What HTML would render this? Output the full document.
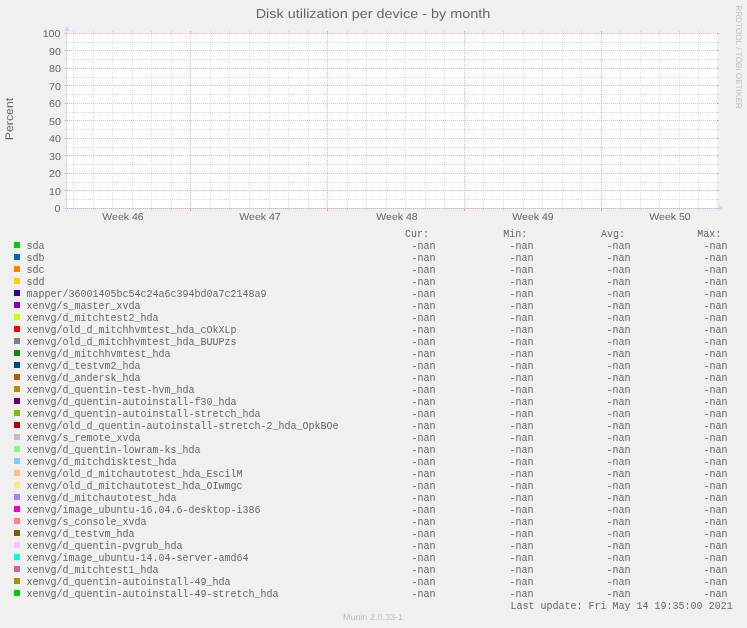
<!DOCTYPE html>
<html><head><meta charset="utf-8"><style>
html,body{margin:0;padding:0;}
body{width:747px;height:628px;background:#F0F0F0;position:relative;overflow:hidden;}
.m{position:absolute;font-family:"Liberation Mono",monospace;font-size:10px;line-height:0;color:#666666;white-space:pre;}
.s{text-rendering:geometricPrecision;position:absolute;font-family:"Liberation Sans",sans-serif;line-height:0;color:#666666;white-space:pre;}
.wm{color:#BEBEBE;}
</style></head><body>
<svg width="747" height="628" viewBox="0 0 747 628" style="position:absolute;left:0;top:0" shape-rendering="crispEdges"><rect x="67" y="33" width="650" height="175" fill="#FFFFFF"/><rect x="66" y="29" width="1" height="183" fill="#D8DBF6"/><rect x="63" y="208" width="659" height="1" fill="#D8DBF6"/><rect x="65" y="42" width="1" height="1" fill="#B5B5B5" fill-opacity="0.52"/><rect x="717" y="42" width="2" height="1" fill="#B5B5B5" fill-opacity="0.52"/><path d="M66 42.5H717" stroke="#B5B5B5" stroke-opacity="0.52" stroke-dasharray="1 1"/><rect x="65" y="59" width="1" height="1" fill="#B5B5B5" fill-opacity="0.52"/><rect x="717" y="59" width="2" height="1" fill="#B5B5B5" fill-opacity="0.52"/><path d="M66 59.5H717" stroke="#B5B5B5" stroke-opacity="0.52" stroke-dasharray="1 1"/><rect x="65" y="77" width="1" height="1" fill="#B5B5B5" fill-opacity="0.52"/><rect x="717" y="77" width="2" height="1" fill="#B5B5B5" fill-opacity="0.52"/><path d="M66 77.5H717" stroke="#B5B5B5" stroke-opacity="0.52" stroke-dasharray="1 1"/><rect x="65" y="94" width="1" height="1" fill="#B5B5B5" fill-opacity="0.52"/><rect x="717" y="94" width="2" height="1" fill="#B5B5B5" fill-opacity="0.52"/><path d="M66 94.5H717" stroke="#B5B5B5" stroke-opacity="0.52" stroke-dasharray="1 1"/><rect x="65" y="112" width="1" height="1" fill="#B5B5B5" fill-opacity="0.52"/><rect x="717" y="112" width="2" height="1" fill="#B5B5B5" fill-opacity="0.52"/><path d="M66 112.5H717" stroke="#B5B5B5" stroke-opacity="0.52" stroke-dasharray="1 1"/><rect x="65" y="129" width="1" height="1" fill="#B5B5B5" fill-opacity="0.52"/><rect x="717" y="129" width="2" height="1" fill="#B5B5B5" fill-opacity="0.52"/><path d="M66 129.5H717" stroke="#B5B5B5" stroke-opacity="0.52" stroke-dasharray="1 1"/><rect x="65" y="147" width="1" height="1" fill="#B5B5B5" fill-opacity="0.52"/><rect x="717" y="147" width="2" height="1" fill="#B5B5B5" fill-opacity="0.52"/><path d="M66 147.5H717" stroke="#B5B5B5" stroke-opacity="0.52" stroke-dasharray="1 1"/><rect x="65" y="164" width="1" height="1" fill="#B5B5B5" fill-opacity="0.52"/><rect x="717" y="164" width="2" height="1" fill="#B5B5B5" fill-opacity="0.52"/><path d="M66 164.5H717" stroke="#B5B5B5" stroke-opacity="0.52" stroke-dasharray="1 1"/><rect x="65" y="182" width="1" height="1" fill="#B5B5B5" fill-opacity="0.52"/><rect x="717" y="182" width="2" height="1" fill="#B5B5B5" fill-opacity="0.52"/><path d="M66 182.5H717" stroke="#B5B5B5" stroke-opacity="0.52" stroke-dasharray="1 1"/><rect x="65" y="199" width="1" height="1" fill="#B5B5B5" fill-opacity="0.52"/><rect x="717" y="199" width="2" height="1" fill="#B5B5B5" fill-opacity="0.52"/><path d="M66 199.5H717" stroke="#B5B5B5" stroke-opacity="0.52" stroke-dasharray="1 1"/><rect x="65" y="33" width="1" height="1" fill="#DE4F4F" fill-opacity="0.44"/><rect x="717" y="33" width="2" height="1" fill="#DE4F4F" fill-opacity="0.44"/><path d="M65 33.5H718" stroke="#DE4F4F" stroke-opacity="0.44" stroke-dasharray="1 1"/><rect x="65" y="50" width="1" height="1" fill="#DE4F4F" fill-opacity="0.44"/><rect x="717" y="50" width="2" height="1" fill="#DE4F4F" fill-opacity="0.44"/><path d="M65 50.5H718" stroke="#DE4F4F" stroke-opacity="0.44" stroke-dasharray="1 1"/><rect x="65" y="68" width="1" height="1" fill="#DE4F4F" fill-opacity="0.44"/><rect x="717" y="68" width="2" height="1" fill="#DE4F4F" fill-opacity="0.44"/><path d="M65 68.5H718" stroke="#DE4F4F" stroke-opacity="0.44" stroke-dasharray="1 1"/><rect x="65" y="85" width="1" height="1" fill="#DE4F4F" fill-opacity="0.44"/><rect x="717" y="85" width="2" height="1" fill="#DE4F4F" fill-opacity="0.44"/><path d="M65 85.5H718" stroke="#DE4F4F" stroke-opacity="0.44" stroke-dasharray="1 1"/><rect x="65" y="103" width="1" height="1" fill="#DE4F4F" fill-opacity="0.44"/><rect x="717" y="103" width="2" height="1" fill="#DE4F4F" fill-opacity="0.44"/><path d="M65 103.5H718" stroke="#DE4F4F" stroke-opacity="0.44" stroke-dasharray="1 1"/><rect x="65" y="120" width="1" height="1" fill="#DE4F4F" fill-opacity="0.44"/><rect x="717" y="120" width="2" height="1" fill="#DE4F4F" fill-opacity="0.44"/><path d="M65 120.5H718" stroke="#DE4F4F" stroke-opacity="0.44" stroke-dasharray="1 1"/><rect x="65" y="138" width="1" height="1" fill="#DE4F4F" fill-opacity="0.44"/><rect x="717" y="138" width="2" height="1" fill="#DE4F4F" fill-opacity="0.44"/><path d="M65 138.5H718" stroke="#DE4F4F" stroke-opacity="0.44" stroke-dasharray="1 1"/><rect x="65" y="155" width="1" height="1" fill="#DE4F4F" fill-opacity="0.44"/><rect x="717" y="155" width="2" height="1" fill="#DE4F4F" fill-opacity="0.44"/><path d="M65 155.5H718" stroke="#DE4F4F" stroke-opacity="0.44" stroke-dasharray="1 1"/><rect x="65" y="173" width="1" height="1" fill="#DE4F4F" fill-opacity="0.44"/><rect x="717" y="173" width="2" height="1" fill="#DE4F4F" fill-opacity="0.44"/><path d="M65 173.5H718" stroke="#DE4F4F" stroke-opacity="0.44" stroke-dasharray="1 1"/><rect x="65" y="190" width="1" height="1" fill="#DE4F4F" fill-opacity="0.44"/><rect x="717" y="190" width="2" height="1" fill="#DE4F4F" fill-opacity="0.44"/><path d="M65 190.5H718" stroke="#DE4F4F" stroke-opacity="0.44" stroke-dasharray="1 1"/><rect x="73" y="31" width="1" height="1" fill="#B5B5B5" fill-opacity="0.46"/><rect x="73" y="209" width="1" height="1" fill="#B5B5B5" fill-opacity="0.46"/><path d="M73.5 32V207" stroke="#B5B5B5" stroke-opacity="0.46" stroke-dasharray="1 1"/><rect x="93" y="31" width="1" height="1" fill="#B5B5B5" fill-opacity="0.46"/><rect x="93" y="209" width="1" height="1" fill="#B5B5B5" fill-opacity="0.46"/><path d="M93.5 32V207" stroke="#B5B5B5" stroke-opacity="0.46" stroke-dasharray="1 1"/><rect x="112" y="31" width="1" height="1" fill="#B5B5B5" fill-opacity="0.46"/><rect x="112" y="209" width="1" height="1" fill="#B5B5B5" fill-opacity="0.46"/><path d="M112.5 32V207" stroke="#B5B5B5" stroke-opacity="0.46" stroke-dasharray="1 1"/><rect x="132" y="31" width="1" height="1" fill="#B5B5B5" fill-opacity="0.46"/><rect x="132" y="209" width="1" height="1" fill="#B5B5B5" fill-opacity="0.46"/><path d="M132.5 32V207" stroke="#B5B5B5" stroke-opacity="0.46" stroke-dasharray="1 1"/><rect x="151" y="31" width="1" height="1" fill="#B5B5B5" fill-opacity="0.46"/><rect x="151" y="209" width="1" height="1" fill="#B5B5B5" fill-opacity="0.46"/><path d="M151.5 32V207" stroke="#B5B5B5" stroke-opacity="0.46" stroke-dasharray="1 1"/><rect x="171" y="31" width="1" height="1" fill="#B5B5B5" fill-opacity="0.46"/><rect x="171" y="209" width="1" height="1" fill="#B5B5B5" fill-opacity="0.46"/><path d="M171.5 32V207" stroke="#B5B5B5" stroke-opacity="0.46" stroke-dasharray="1 1"/><rect x="190" y="31" width="1" height="1" fill="#DE4F4F" fill-opacity="0.42"/><rect x="190" y="33" width="1" height="1" fill="#DE4F4F" fill-opacity="0.25"/><rect x="190" y="209" width="1" height="2" fill="#DE4F4F" fill-opacity="0.55"/><path d="M190.5 32V207" stroke="#DE4F4F" stroke-opacity="0.42" stroke-dasharray="1 1"/><rect x="210" y="31" width="1" height="1" fill="#B5B5B5" fill-opacity="0.46"/><rect x="210" y="209" width="1" height="1" fill="#B5B5B5" fill-opacity="0.46"/><path d="M210.5 32V207" stroke="#B5B5B5" stroke-opacity="0.46" stroke-dasharray="1 1"/><rect x="229" y="31" width="1" height="1" fill="#B5B5B5" fill-opacity="0.46"/><rect x="229" y="209" width="1" height="1" fill="#B5B5B5" fill-opacity="0.46"/><path d="M229.5 32V207" stroke="#B5B5B5" stroke-opacity="0.46" stroke-dasharray="1 1"/><rect x="249" y="31" width="1" height="1" fill="#B5B5B5" fill-opacity="0.46"/><rect x="249" y="209" width="1" height="1" fill="#B5B5B5" fill-opacity="0.46"/><path d="M249.5 32V207" stroke="#B5B5B5" stroke-opacity="0.46" stroke-dasharray="1 1"/><rect x="269" y="31" width="1" height="1" fill="#B5B5B5" fill-opacity="0.46"/><rect x="269" y="209" width="1" height="1" fill="#B5B5B5" fill-opacity="0.46"/><path d="M269.5 32V207" stroke="#B5B5B5" stroke-opacity="0.46" stroke-dasharray="1 1"/><rect x="288" y="31" width="1" height="1" fill="#B5B5B5" fill-opacity="0.46"/><rect x="288" y="209" width="1" height="1" fill="#B5B5B5" fill-opacity="0.46"/><path d="M288.5 32V207" stroke="#B5B5B5" stroke-opacity="0.46" stroke-dasharray="1 1"/><rect x="308" y="31" width="1" height="1" fill="#B5B5B5" fill-opacity="0.46"/><rect x="308" y="209" width="1" height="1" fill="#B5B5B5" fill-opacity="0.46"/><path d="M308.5 32V207" stroke="#B5B5B5" stroke-opacity="0.46" stroke-dasharray="1 1"/><rect x="327" y="31" width="1" height="1" fill="#DE4F4F" fill-opacity="0.42"/><rect x="327" y="33" width="1" height="1" fill="#DE4F4F" fill-opacity="0.25"/><rect x="327" y="209" width="1" height="2" fill="#DE4F4F" fill-opacity="0.55"/><path d="M327.5 32V207" stroke="#DE4F4F" stroke-opacity="0.42" stroke-dasharray="1 1"/><rect x="347" y="31" width="1" height="1" fill="#B5B5B5" fill-opacity="0.46"/><rect x="347" y="209" width="1" height="1" fill="#B5B5B5" fill-opacity="0.46"/><path d="M347.5 32V207" stroke="#B5B5B5" stroke-opacity="0.46" stroke-dasharray="1 1"/><rect x="366" y="31" width="1" height="1" fill="#B5B5B5" fill-opacity="0.46"/><rect x="366" y="209" width="1" height="1" fill="#B5B5B5" fill-opacity="0.46"/><path d="M366.5 32V207" stroke="#B5B5B5" stroke-opacity="0.46" stroke-dasharray="1 1"/><rect x="386" y="31" width="1" height="1" fill="#B5B5B5" fill-opacity="0.46"/><rect x="386" y="209" width="1" height="1" fill="#B5B5B5" fill-opacity="0.46"/><path d="M386.5 32V207" stroke="#B5B5B5" stroke-opacity="0.46" stroke-dasharray="1 1"/><rect x="405" y="31" width="1" height="1" fill="#B5B5B5" fill-opacity="0.46"/><rect x="405" y="209" width="1" height="1" fill="#B5B5B5" fill-opacity="0.46"/><path d="M405.5 32V207" stroke="#B5B5B5" stroke-opacity="0.46" stroke-dasharray="1 1"/><rect x="425" y="31" width="1" height="1" fill="#B5B5B5" fill-opacity="0.46"/><rect x="425" y="209" width="1" height="1" fill="#B5B5B5" fill-opacity="0.46"/><path d="M425.5 32V207" stroke="#B5B5B5" stroke-opacity="0.46" stroke-dasharray="1 1"/><rect x="444" y="31" width="1" height="1" fill="#B5B5B5" fill-opacity="0.46"/><rect x="444" y="209" width="1" height="1" fill="#B5B5B5" fill-opacity="0.46"/><path d="M444.5 32V207" stroke="#B5B5B5" stroke-opacity="0.46" stroke-dasharray="1 1"/><rect x="464" y="31" width="1" height="1" fill="#DE4F4F" fill-opacity="0.42"/><rect x="464" y="33" width="1" height="1" fill="#DE4F4F" fill-opacity="0.25"/><rect x="464" y="209" width="1" height="2" fill="#DE4F4F" fill-opacity="0.55"/><path d="M464.5 32V207" stroke="#DE4F4F" stroke-opacity="0.42" stroke-dasharray="1 1"/><rect x="483" y="31" width="1" height="1" fill="#B5B5B5" fill-opacity="0.46"/><rect x="483" y="209" width="1" height="1" fill="#B5B5B5" fill-opacity="0.46"/><path d="M483.5 32V207" stroke="#B5B5B5" stroke-opacity="0.46" stroke-dasharray="1 1"/><rect x="503" y="31" width="1" height="1" fill="#B5B5B5" fill-opacity="0.46"/><rect x="503" y="209" width="1" height="1" fill="#B5B5B5" fill-opacity="0.46"/><path d="M503.5 32V207" stroke="#B5B5B5" stroke-opacity="0.46" stroke-dasharray="1 1"/><rect x="523" y="31" width="1" height="1" fill="#B5B5B5" fill-opacity="0.46"/><rect x="523" y="209" width="1" height="1" fill="#B5B5B5" fill-opacity="0.46"/><path d="M523.5 32V207" stroke="#B5B5B5" stroke-opacity="0.46" stroke-dasharray="1 1"/><rect x="542" y="31" width="1" height="1" fill="#B5B5B5" fill-opacity="0.46"/><rect x="542" y="209" width="1" height="1" fill="#B5B5B5" fill-opacity="0.46"/><path d="M542.5 32V207" stroke="#B5B5B5" stroke-opacity="0.46" stroke-dasharray="1 1"/><rect x="562" y="31" width="1" height="1" fill="#B5B5B5" fill-opacity="0.46"/><rect x="562" y="209" width="1" height="1" fill="#B5B5B5" fill-opacity="0.46"/><path d="M562.5 32V207" stroke="#B5B5B5" stroke-opacity="0.46" stroke-dasharray="1 1"/><rect x="581" y="31" width="1" height="1" fill="#B5B5B5" fill-opacity="0.46"/><rect x="581" y="209" width="1" height="1" fill="#B5B5B5" fill-opacity="0.46"/><path d="M581.5 32V207" stroke="#B5B5B5" stroke-opacity="0.46" stroke-dasharray="1 1"/><rect x="601" y="31" width="1" height="1" fill="#DE4F4F" fill-opacity="0.42"/><rect x="601" y="33" width="1" height="1" fill="#DE4F4F" fill-opacity="0.25"/><rect x="601" y="209" width="1" height="2" fill="#DE4F4F" fill-opacity="0.55"/><path d="M601.5 32V207" stroke="#DE4F4F" stroke-opacity="0.42" stroke-dasharray="1 1"/><rect x="620" y="31" width="1" height="1" fill="#B5B5B5" fill-opacity="0.46"/><rect x="620" y="209" width="1" height="1" fill="#B5B5B5" fill-opacity="0.46"/><path d="M620.5 32V207" stroke="#B5B5B5" stroke-opacity="0.46" stroke-dasharray="1 1"/><rect x="640" y="31" width="1" height="1" fill="#B5B5B5" fill-opacity="0.46"/><rect x="640" y="209" width="1" height="1" fill="#B5B5B5" fill-opacity="0.46"/><path d="M640.5 32V207" stroke="#B5B5B5" stroke-opacity="0.46" stroke-dasharray="1 1"/><rect x="659" y="31" width="1" height="1" fill="#B5B5B5" fill-opacity="0.46"/><rect x="659" y="209" width="1" height="1" fill="#B5B5B5" fill-opacity="0.46"/><path d="M659.5 32V207" stroke="#B5B5B5" stroke-opacity="0.46" stroke-dasharray="1 1"/><rect x="679" y="31" width="1" height="1" fill="#B5B5B5" fill-opacity="0.46"/><rect x="679" y="209" width="1" height="1" fill="#B5B5B5" fill-opacity="0.46"/><path d="M679.5 32V207" stroke="#B5B5B5" stroke-opacity="0.46" stroke-dasharray="1 1"/><rect x="698" y="31" width="1" height="1" fill="#B5B5B5" fill-opacity="0.46"/><rect x="698" y="209" width="1" height="1" fill="#B5B5B5" fill-opacity="0.46"/><path d="M698.5 32V207" stroke="#B5B5B5" stroke-opacity="0.46" stroke-dasharray="1 1"/><path d="M65 208.5H718" stroke="#DE4F4F" stroke-opacity="0.3" stroke-dasharray="1 1"/><rect x="718" y="208" width="1" height="1" fill="#DE4F4F" fill-opacity="0.3"/><path d="M64 31L70 31L67 26Z" fill="#CFD6F8" shape-rendering="auto"/><path d="M719 205L719 211L724 208Z" fill="#CFD6F8" shape-rendering="auto"/><rect x="14" y="242" width="6" height="6" fill="#00CC00"/><rect x="14" y="254" width="6" height="6" fill="#0066B3"/><rect x="14" y="266" width="6" height="6" fill="#FF8000"/><rect x="14" y="278" width="6" height="6" fill="#FFCC00"/><rect x="14" y="290" width="6" height="6" fill="#330099"/><rect x="14" y="302" width="6" height="6" fill="#990099"/><rect x="14" y="314" width="6" height="6" fill="#CCFF00"/><rect x="14" y="326" width="6" height="6" fill="#FF0000"/><rect x="14" y="338" width="6" height="6" fill="#808080"/><rect x="14" y="350" width="6" height="6" fill="#008F00"/><rect x="14" y="362" width="6" height="6" fill="#00487D"/><rect x="14" y="374" width="6" height="6" fill="#B35A00"/><rect x="14" y="386" width="6" height="6" fill="#B38F00"/><rect x="14" y="398" width="6" height="6" fill="#6B006B"/><rect x="14" y="410" width="6" height="6" fill="#8FB300"/><rect x="14" y="422" width="6" height="6" fill="#B30000"/><rect x="14" y="434" width="6" height="6" fill="#BEBEBE"/><rect x="14" y="446" width="6" height="6" fill="#80FF80"/><rect x="14" y="458" width="6" height="6" fill="#80C9FF"/><rect x="14" y="470" width="6" height="6" fill="#FFC080"/><rect x="14" y="482" width="6" height="6" fill="#FFE680"/><rect x="14" y="494" width="6" height="6" fill="#AA80FF"/><rect x="14" y="506" width="6" height="6" fill="#EE00CC"/><rect x="14" y="518" width="6" height="6" fill="#FF8080"/><rect x="14" y="530" width="6" height="6" fill="#666600"/><rect x="14" y="542" width="6" height="6" fill="#FFBFFF"/><rect x="14" y="554" width="6" height="6" fill="#00FFCC"/><rect x="14" y="566" width="6" height="6" fill="#CC6699"/><rect x="14" y="578" width="6" height="6" fill="#999900"/><rect x="14" y="590" width="6" height="6" fill="#00CC00"/></svg>
<div style="position:absolute;left:0;top:0;width:747px;height:628px;filter:grayscale(1)"><div class="m" style="left:26.5px;top:247px">sda</div><div class="m" style="left:411.5px;top:247px">-nan</div><div class="m" style="left:509.5px;top:247px">-nan</div><div class="m" style="left:606.5px;top:247px">-nan</div><div class="m" style="left:703.5px;top:247px">-nan</div><div class="m" style="left:26.5px;top:259px">sdb</div><div class="m" style="left:411.5px;top:259px">-nan</div><div class="m" style="left:509.5px;top:259px">-nan</div><div class="m" style="left:606.5px;top:259px">-nan</div><div class="m" style="left:703.5px;top:259px">-nan</div><div class="m" style="left:26.5px;top:271px">sdc</div><div class="m" style="left:411.5px;top:271px">-nan</div><div class="m" style="left:509.5px;top:271px">-nan</div><div class="m" style="left:606.5px;top:271px">-nan</div><div class="m" style="left:703.5px;top:271px">-nan</div><div class="m" style="left:26.5px;top:283px">sdd</div><div class="m" style="left:411.5px;top:283px">-nan</div><div class="m" style="left:509.5px;top:283px">-nan</div><div class="m" style="left:606.5px;top:283px">-nan</div><div class="m" style="left:703.5px;top:283px">-nan</div><div class="m" style="left:26.5px;top:295px">mapper/36001405bc54c24a6c394bd0a7c2148a9</div><div class="m" style="left:411.5px;top:295px">-nan</div><div class="m" style="left:509.5px;top:295px">-nan</div><div class="m" style="left:606.5px;top:295px">-nan</div><div class="m" style="left:703.5px;top:295px">-nan</div><div class="m" style="left:26.5px;top:307px">xenvg/s_master_xvda</div><div class="m" style="left:411.5px;top:307px">-nan</div><div class="m" style="left:509.5px;top:307px">-nan</div><div class="m" style="left:606.5px;top:307px">-nan</div><div class="m" style="left:703.5px;top:307px">-nan</div><div class="m" style="left:26.5px;top:319px">xenvg/d_mitchtest2_hda</div><div class="m" style="left:411.5px;top:319px">-nan</div><div class="m" style="left:509.5px;top:319px">-nan</div><div class="m" style="left:606.5px;top:319px">-nan</div><div class="m" style="left:703.5px;top:319px">-nan</div><div class="m" style="left:26.5px;top:331px">xenvg/old_d_mitchhvmtest_hda_cOkXLp</div><div class="m" style="left:411.5px;top:331px">-nan</div><div class="m" style="left:509.5px;top:331px">-nan</div><div class="m" style="left:606.5px;top:331px">-nan</div><div class="m" style="left:703.5px;top:331px">-nan</div><div class="m" style="left:26.5px;top:343px">xenvg/old_d_mitchhvmtest_hda_BUUPzs</div><div class="m" style="left:411.5px;top:343px">-nan</div><div class="m" style="left:509.5px;top:343px">-nan</div><div class="m" style="left:606.5px;top:343px">-nan</div><div class="m" style="left:703.5px;top:343px">-nan</div><div class="m" style="left:26.5px;top:355px">xenvg/d_mitchhvmtest_hda</div><div class="m" style="left:411.5px;top:355px">-nan</div><div class="m" style="left:509.5px;top:355px">-nan</div><div class="m" style="left:606.5px;top:355px">-nan</div><div class="m" style="left:703.5px;top:355px">-nan</div><div class="m" style="left:26.5px;top:367px">xenvg/d_testvm2_hda</div><div class="m" style="left:411.5px;top:367px">-nan</div><div class="m" style="left:509.5px;top:367px">-nan</div><div class="m" style="left:606.5px;top:367px">-nan</div><div class="m" style="left:703.5px;top:367px">-nan</div><div class="m" style="left:26.5px;top:379px">xenvg/d_andersk_hda</div><div class="m" style="left:411.5px;top:379px">-nan</div><div class="m" style="left:509.5px;top:379px">-nan</div><div class="m" style="left:606.5px;top:379px">-nan</div><div class="m" style="left:703.5px;top:379px">-nan</div><div class="m" style="left:26.5px;top:391px">xenvg/d_quentin-test-hvm_hda</div><div class="m" style="left:411.5px;top:391px">-nan</div><div class="m" style="left:509.5px;top:391px">-nan</div><div class="m" style="left:606.5px;top:391px">-nan</div><div class="m" style="left:703.5px;top:391px">-nan</div><div class="m" style="left:26.5px;top:403px">xenvg/d_quentin-autoinstall-f30_hda</div><div class="m" style="left:411.5px;top:403px">-nan</div><div class="m" style="left:509.5px;top:403px">-nan</div><div class="m" style="left:606.5px;top:403px">-nan</div><div class="m" style="left:703.5px;top:403px">-nan</div><div class="m" style="left:26.5px;top:415px">xenvg/d_quentin-autoinstall-stretch_hda</div><div class="m" style="left:411.5px;top:415px">-nan</div><div class="m" style="left:509.5px;top:415px">-nan</div><div class="m" style="left:606.5px;top:415px">-nan</div><div class="m" style="left:703.5px;top:415px">-nan</div><div class="m" style="left:26.5px;top:427px">xenvg/old_d_quentin-autoinstall-stretch-2_hda_OpkBOe</div><div class="m" style="left:411.5px;top:427px">-nan</div><div class="m" style="left:509.5px;top:427px">-nan</div><div class="m" style="left:606.5px;top:427px">-nan</div><div class="m" style="left:703.5px;top:427px">-nan</div><div class="m" style="left:26.5px;top:439px">xenvg/s_remote_xvda</div><div class="m" style="left:411.5px;top:439px">-nan</div><div class="m" style="left:509.5px;top:439px">-nan</div><div class="m" style="left:606.5px;top:439px">-nan</div><div class="m" style="left:703.5px;top:439px">-nan</div><div class="m" style="left:26.5px;top:451px">xenvg/d_quentin-lowram-ks_hda</div><div class="m" style="left:411.5px;top:451px">-nan</div><div class="m" style="left:509.5px;top:451px">-nan</div><div class="m" style="left:606.5px;top:451px">-nan</div><div class="m" style="left:703.5px;top:451px">-nan</div><div class="m" style="left:26.5px;top:463px">xenvg/d_mitchdisktest_hda</div><div class="m" style="left:411.5px;top:463px">-nan</div><div class="m" style="left:509.5px;top:463px">-nan</div><div class="m" style="left:606.5px;top:463px">-nan</div><div class="m" style="left:703.5px;top:463px">-nan</div><div class="m" style="left:26.5px;top:475px">xenvg/old_d_mitchautotest_hda_EscilM</div><div class="m" style="left:411.5px;top:475px">-nan</div><div class="m" style="left:509.5px;top:475px">-nan</div><div class="m" style="left:606.5px;top:475px">-nan</div><div class="m" style="left:703.5px;top:475px">-nan</div><div class="m" style="left:26.5px;top:487px">xenvg/old_d_mitchautotest_hda_OIwmgc</div><div class="m" style="left:411.5px;top:487px">-nan</div><div class="m" style="left:509.5px;top:487px">-nan</div><div class="m" style="left:606.5px;top:487px">-nan</div><div class="m" style="left:703.5px;top:487px">-nan</div><div class="m" style="left:26.5px;top:499px">xenvg/d_mitchautotest_hda</div><div class="m" style="left:411.5px;top:499px">-nan</div><div class="m" style="left:509.5px;top:499px">-nan</div><div class="m" style="left:606.5px;top:499px">-nan</div><div class="m" style="left:703.5px;top:499px">-nan</div><div class="m" style="left:26.5px;top:511px">xenvg/image_ubuntu-16.04.6-desktop-i386</div><div class="m" style="left:411.5px;top:511px">-nan</div><div class="m" style="left:509.5px;top:511px">-nan</div><div class="m" style="left:606.5px;top:511px">-nan</div><div class="m" style="left:703.5px;top:511px">-nan</div><div class="m" style="left:26.5px;top:523px">xenvg/s_console_xvda</div><div class="m" style="left:411.5px;top:523px">-nan</div><div class="m" style="left:509.5px;top:523px">-nan</div><div class="m" style="left:606.5px;top:523px">-nan</div><div class="m" style="left:703.5px;top:523px">-nan</div><div class="m" style="left:26.5px;top:535px">xenvg/d_testvm_hda</div><div class="m" style="left:411.5px;top:535px">-nan</div><div class="m" style="left:509.5px;top:535px">-nan</div><div class="m" style="left:606.5px;top:535px">-nan</div><div class="m" style="left:703.5px;top:535px">-nan</div><div class="m" style="left:26.5px;top:547px">xenvg/d_quentin-pvgrub_hda</div><div class="m" style="left:411.5px;top:547px">-nan</div><div class="m" style="left:509.5px;top:547px">-nan</div><div class="m" style="left:606.5px;top:547px">-nan</div><div class="m" style="left:703.5px;top:547px">-nan</div><div class="m" style="left:26.5px;top:559px">xenvg/image_ubuntu-14.04-server-amd64</div><div class="m" style="left:411.5px;top:559px">-nan</div><div class="m" style="left:509.5px;top:559px">-nan</div><div class="m" style="left:606.5px;top:559px">-nan</div><div class="m" style="left:703.5px;top:559px">-nan</div><div class="m" style="left:26.5px;top:571px">xenvg/d_mitchtest1_hda</div><div class="m" style="left:411.5px;top:571px">-nan</div><div class="m" style="left:509.5px;top:571px">-nan</div><div class="m" style="left:606.5px;top:571px">-nan</div><div class="m" style="left:703.5px;top:571px">-nan</div><div class="m" style="left:26.5px;top:583px">xenvg/d_quentin-autoinstall-49_hda</div><div class="m" style="left:411.5px;top:583px">-nan</div><div class="m" style="left:509.5px;top:583px">-nan</div><div class="m" style="left:606.5px;top:583px">-nan</div><div class="m" style="left:703.5px;top:583px">-nan</div><div class="m" style="left:26.5px;top:595px">xenvg/d_quentin-autoinstall-49-stretch_hda</div><div class="m" style="left:411.5px;top:595px">-nan</div><div class="m" style="left:509.5px;top:595px">-nan</div><div class="m" style="left:606.5px;top:595px">-nan</div><div class="m" style="left:703.5px;top:595px">-nan</div><div class="m" style="left:405px;top:235px">Cur:</div><div class="m" style="left:503.3px;top:235px">Min:</div><div class="m" style="left:601px;top:235px">Avg:</div><div class="m" style="left:697.3px;top:235px">Max:</div><div class="m" style="left:510.6px;top:607px">Last update: Fri May 14 19:35:00 2021</div><div class="s" style="left:373.0px;top:13.5px;font-size:13px;transform:translateX(-50%) scaleX(1.108)">Disk utilization per device - by month</div><div class="s" style="right:686.5px;top:34.5px;font-size:9.9px;transform:scale(1.08,1.0);transform-origin:100% 3.5px">100</div><div class="s" style="right:686.5px;top:52.5px;font-size:9.9px;transform:scale(1.08,1.0);transform-origin:100% 3.5px">90</div><div class="s" style="right:686.5px;top:69.5px;font-size:9.9px;transform:scale(1.08,1.0);transform-origin:100% 3.5px">80</div><div class="s" style="right:686.5px;top:87.5px;font-size:9.9px;transform:scale(1.08,1.0);transform-origin:100% 3.5px">70</div><div class="s" style="right:686.5px;top:104.5px;font-size:9.9px;transform:scale(1.08,1.0);transform-origin:100% 3.5px">60</div><div class="s" style="right:686.5px;top:122.5px;font-size:9.9px;transform:scale(1.08,1.0);transform-origin:100% 3.5px">50</div><div class="s" style="right:686.5px;top:139.5px;font-size:9.9px;transform:scale(1.08,1.0);transform-origin:100% 3.5px">40</div><div class="s" style="right:686.5px;top:157.5px;font-size:9.9px;transform:scale(1.08,1.0);transform-origin:100% 3.5px">30</div><div class="s" style="right:686.5px;top:174.5px;font-size:9.9px;transform:scale(1.08,1.0);transform-origin:100% 3.5px">20</div><div class="s" style="right:686.5px;top:192.5px;font-size:9.9px;transform:scale(1.08,1.0);transform-origin:100% 3.5px">10</div><div class="s" style="right:686.5px;top:209.5px;font-size:9.9px;transform:scale(1.08,1.0);transform-origin:100% 3.5px">0</div><div class="s" style="left:123.1px;top:218.0px;font-size:9.9px;transform:translateX(-50%) scaleX(1.07)">Week 46</div><div class="s" style="left:259.8px;top:218.0px;font-size:9.9px;transform:translateX(-50%) scaleX(1.07)">Week 47</div><div class="s" style="left:396.5px;top:218.0px;font-size:9.9px;transform:translateX(-50%) scaleX(1.07)">Week 48</div><div class="s" style="left:533.2px;top:218.0px;font-size:9.9px;transform:translateX(-50%) scaleX(1.07)">Week 49</div><div class="s" style="left:669.9px;top:218.0px;font-size:9.9px;transform:translateX(-50%) scaleX(1.07)">Week 50</div><div class="s" style="left:10.0px;top:119.0px;font-size:11.0px;transform:translateX(-50%) rotate(-90deg) scaleX(1.12)">Percent</div><div class="s wm" style="left:738.0px;top:56.5px;font-size:8.2px;transform:translateX(-50%) rotate(90deg)">RRDTOOL / TOBI OETIKER</div><div class="s wm" style="left:373.4px;top:617.0px;font-size:8.6px;transform:translateX(-50%) scaleX(1.05)">Munin 2.0.33-1</div></div>
</body></html>
